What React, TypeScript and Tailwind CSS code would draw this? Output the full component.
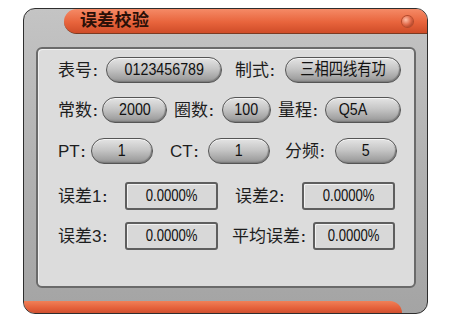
import React from "react";

const font = { fontFamily: '"Liberation Sans", "Noto Sans CJK SC", sans-serif' };

function Pill({ w, children, left }: { w: number; children: React.ReactNode; left?: boolean }) {
  return (
    <div
      className={
        left
          ? "h-[26px] shrink-0 rounded-full border border-[#555] bg-[linear-gradient(to_bottom,#e4e4e4,#c6c6c6_45%,#a2a2a2_85%,#8c8c8c)] shadow-[inset_0_1px_0_#f4f4f4,inset_-1px_-1px_1px_#7a7a7a] flex items-center justify-start pl-[10px] text-[17px] text-[#111] overflow-hidden"
          : "h-[26px] shrink-0 rounded-full border border-[#555] bg-[linear-gradient(to_bottom,#e4e4e4,#c6c6c6_45%,#a2a2a2_85%,#8c8c8c)] shadow-[inset_0_1px_0_#f4f4f4,inset_-1px_-1px_1px_#7a7a7a] flex items-center justify-center text-[17px] text-[#111] overflow-hidden"
      }
      style={{ width: w }}
    >
      <span className="inline-block scale-x-[0.84] whitespace-nowrap">{children}</span>
    </div>
  );
}

function Box({ w, children }: { w: number; children: React.ReactNode }) {
  return (
    <div
      className="h-[28px] shrink-0 rounded-[3px] border-2 border-[#5e5e5e] bg-[#d8d8d8] shadow-[inset_1px_1px_0_#f2f2f2] flex items-center justify-center text-[16px] text-[#111]"
      style={{ width: w }}
    >
      <span className="inline-block scale-x-[0.82] whitespace-nowrap">{children}</span>
    </div>
  );
}

function Label({ children, w }: { children: React.ReactNode; w?: number }) {
  return (
    <div className="shrink-0 text-[17px] text-[#1e1e1e] whitespace-nowrap leading-none" style={w ? { width: w } : undefined}>
      {children}
    </div>
  );
}

const C = <span className="font-bold text-[14px] ml-[1px]">:</span>;

export default function App() {
  return (
    <div className="w-[468px] h-[325px] bg-white pt-[8px] pl-[23px]" style={font}>
      <div className="w-[405px] h-[306px] rounded-[12px] border border-[#2e2e2e] overflow-hidden bg-[linear-gradient(to_bottom,#c4c4c4,#b2b2b2_50%,#a4a4a4)] flex flex-col">
        {/* title bar */}
        <div className="flex h-[25px] shrink-0">
          <div className="w-[40px] shrink-0" />
          <div className="flex-1 rounded-l-full border-b border-[#7a3a22] bg-[linear-gradient(to_bottom,#f58a66,#e8643c_55%,#cf4c28)] flex items-center pl-[16px] pr-[14px]">
            <span className="text-[17px] font-bold text-[#2a1008] tracking-[0.3px]">误差校验</span>
            <div className="ml-auto w-[11px] h-[11px] rounded-full bg-[radial-gradient(circle_at_35%_35%,#ffc0a8,#e06848_50%,#8a3018)] shadow-[0_0_0_1px_#b24a2c]" />
          </div>
        </div>
        {/* inner panel */}
        <div className="mt-[13px] ml-[12px] mr-[11px] h-[241px] shrink-0 rounded-[6px] border-2 border-[#6a6a6a] bg-[#dcdcdc] shadow-[inset_1px_1px_0_#f0f0f0] pl-[20px] pt-[8px] flex flex-col">
          {/* row1 */}
          <div className="flex items-center h-[26px]">
            <Label w={48}>表号{C}</Label>
            <Pill w={116}>0123456789</Pill>
            <Label w={63}><span className="ml-[13px]">制式{C}</span></Label>
            <Pill w={116}>三相四线有功</Pill>
          </div>
          {/* row2 */}
          <div className="flex items-center h-[26px] mt-[14px]">
            <Label w={44}>常数{C}</Label>
            <Pill w={65}>2000</Pill>
            <Label w={55}><span className="ml-[7px]">圈数{C}</span></Label>
            <Pill w={49}>100</Pill>
            <Label w={54}><span className="ml-[7px]">量程{C}</span></Label>
            <Pill w={76} left>Q5A</Pill>
          </div>
          {/* row3 */}
          <div className="flex items-center h-[26px] mt-[15px]">
            <Label w={33}>PT{C}</Label>
            <Pill w={62}>1</Pill>
            <Label w={55}><span className="ml-[17px]">CT{C}</span></Label>
            <Pill w={62}>1</Pill>
            <Label w={65}><span className="ml-[15px]">分频{C}</span></Label>
            <Pill w={62}>5</Pill>
          </div>
          {/* row4 */}
          <div className="flex items-center h-[28px] mt-[18px]">
            <Label w={67}>误差1{C}</Label>
            <Box w={93}>0.0000%</Box>
            <Label w={84}><span className="ml-[17px]">误差2{C}</span></Label>
            <Box w={93}>0.0000%</Box>
          </div>
          {/* row5 */}
          <div className="flex items-center h-[28px] mt-[12px]">
            <Label w={67}>误差3{C}</Label>
            <Box w={93}>0.0000%</Box>
            <Label w={95}><span className="ml-[14px]">平均误差{C}</span></Label>
            <Box w={82}>0.0000%</Box>
          </div>
        </div>
        {/* bottom orange bar */}
        <div className="mt-auto h-[12px] shrink-0 mr-[25px] rounded-tr-full bg-[linear-gradient(to_bottom,#f08058,#e4603a_60%,#d05030)]" />
      </div>
    </div>
  );
}
